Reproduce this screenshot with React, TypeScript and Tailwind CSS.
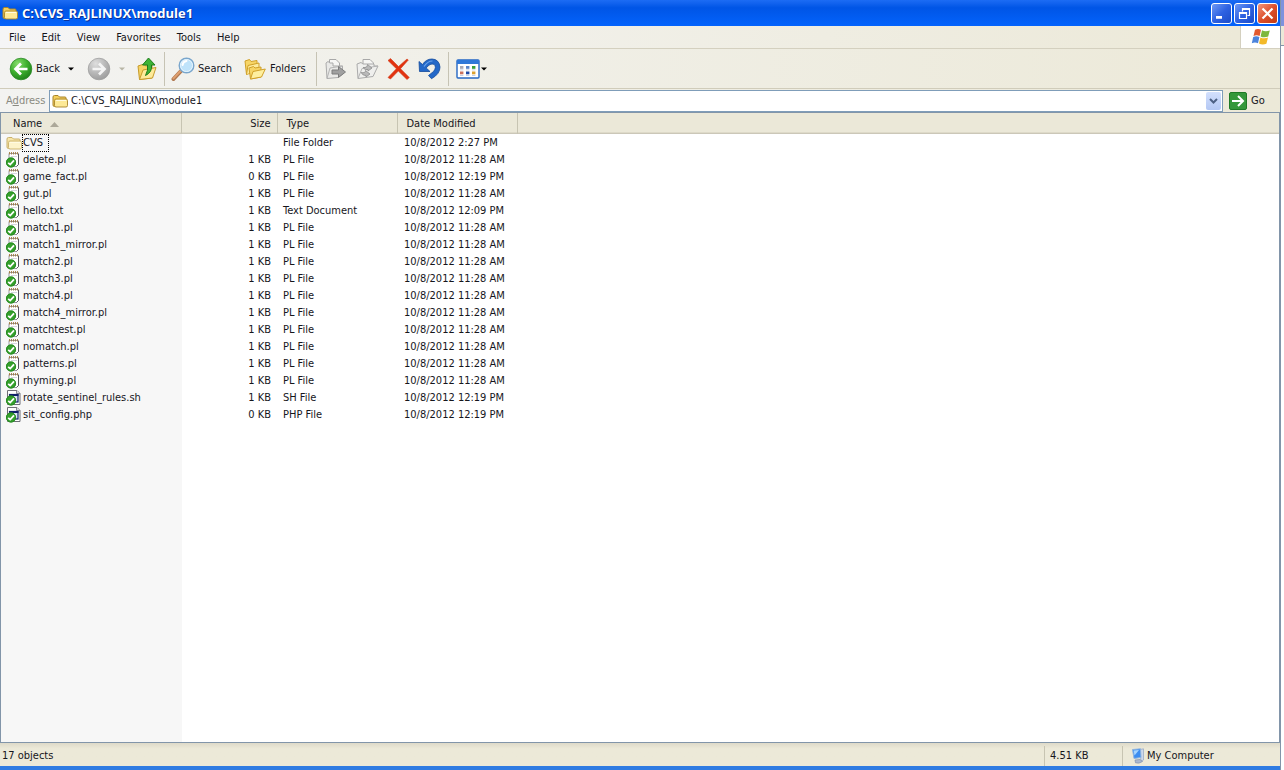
import { clsx } from 'clsx';

type FileKind = 'folder' | 'doc' | 'script';

interface Entry {
    name: string;
    size: string;
    type: string;
    modified: string;
    kind: FileKind;
}

const pl = (name: string, size = '1 KB', modified = '10/8/2012 11:28 AM'): Entry => ({
    name,
    size,
    type: 'PL File',
    modified,
    kind: 'doc',
});

const entries: Entry[] = [
    { name: 'CVS', size: '', type: 'File Folder', modified: '10/8/2012 2:27 PM', kind: 'folder' },
    pl('delete.pl'),
    pl('game_fact.pl', '0 KB', '10/8/2012 12:19 PM'),
    pl('gut.pl'),
    { name: 'hello.txt', size: '1 KB', type: 'Text Document', modified: '10/8/2012 12:09 PM', kind: 'doc' },
    pl('match1.pl'),
    pl('match1_mirror.pl'),
    pl('match2.pl'),
    pl('match3.pl'),
    pl('match4.pl'),
    pl('match4_mirror.pl'),
    pl('matchtest.pl'),
    pl('nomatch.pl'),
    pl('patterns.pl'),
    pl('rhyming.pl'),
    { name: 'rotate_sentinel_rules.sh', size: '1 KB', type: 'SH File', modified: '10/8/2012 12:19 PM', kind: 'script' },
    { name: 'sit_config.php', size: '0 KB', type: 'PHP File', modified: '10/8/2012 12:19 PM', kind: 'script' },
];

const menus = ['File', 'Edit', 'View', 'Favorites', 'Tools', 'Help'];

function FolderIcon({ className, pale }: { className?: string; pale?: boolean }) {
    const edge = pale ? '#c9b06a' : '#a8842a';
    return (
        <svg viewBox="0 0 16 14" className={className} aria-hidden="true">
            <path d="M1 3 Q1 1.5 2.5 1.5 H6 L7.5 3 H13 Q14 3 14 4 V11 Q14 12.5 12.5 12.5 H2.5 Q1 12.5 1 11 Z" fill={pale ? '#f8e6a8' : '#f4cf5c'} stroke={edge} />
            <path d="M2.5 6.5 Q2.5 5 4 5 H14 Q15.5 5 15.5 6.5 V11.5 Q15.5 13 14 13 H4 Q2.5 13 2.5 11.5 Z" fill={pale ? '#fdf4cb' : '#fde996'} stroke={edge} strokeWidth="0.9" />
            <path d="M4 6.5 H14" stroke="#fffbe2" />
        </svg>
    );
}

function OkBadge() {
    return (
        <>
            <circle cx="5" cy="10.5" r="5" fill="#35a02c" />
            <circle cx="5" cy="10.5" r="4.6" fill="none" stroke="#1f831d" strokeWidth="0.8" />
            <path d="M2.2 10.8 L4.2 12.6 L8 8.4" fill="none" stroke="#fff" strokeWidth="1.8" />
        </>
    );
}

function EntryIcon({ kind }: { kind: FileKind }) {
    if (kind === 'folder') {
        return <FolderIcon className="h-[14px] w-4" pale />;
    }
    return (
        <svg viewBox="0 0 15 16" className="h-4 w-[15px]" aria-hidden="true">
            {kind === 'doc' ? (
                <>
                    <path d="M3 1.5 H12.5 V12.5 L10.5 14.5 H3 Z" fill="#fff" stroke="#9a9aa2" />
                    <path d="M12.5 2 V12.5 L10.5 14.5" fill="none" stroke="#55555f" />
                    <path d="M3.5 0 V2.5 M5.5 0 V2.5 M7.5 0 V2.5 M9.5 0 V2.5 M11.5 0 V2.5" stroke="#a07a40" strokeWidth="0.9" />
                    <path d="M5 4.5 H11" stroke="#d5d5de" />
                </>
            ) : (
                <>
                    <path d="M1.5 0.5 H11 L14 3.5 V14.5 H1.5 Z" fill="#fff" stroke="#6e6e76" />
                    <path d="M10.5 0.5 V3.5 H14" fill="#dcdce4" stroke="#6e6e76" strokeWidth="0.8" />
                    <rect x="3.5" y="4.5" width="8.5" height="7.5" fill="#dfe6f6" stroke="#10206a" strokeWidth="1.2" />
                    <path d="M3 5 H12.5" stroke="#10206a" strokeWidth="2" />
                </>
            )}
            <OkBadge />
        </svg>
    );
}

function RoundArrow({ back }: { back?: boolean }) {
    return (
        <svg viewBox="0 0 24 24" className="size-6 shrink-0" aria-hidden="true">
            <defs>
                <radialGradient id={back ? 'roundGreen' : 'roundGray'} cx="0.35" cy="0.25" r="0.85">
                    <stop offset="0" stopColor={back ? '#86dc6c' : '#dedede'} />
                    <stop offset="0.5" stopColor={back ? '#3eb02e' : '#b9b9b9'} />
                    <stop offset="1" stopColor={back ? '#1a7a17' : '#989898'} />
                </radialGradient>
            </defs>
            <circle cx="12" cy="12" r="10.8" fill={back ? 'url(#roundGreen)' : 'url(#roundGray)'} stroke={back ? '#2c8a26' : '#a0a0a0'} strokeWidth="0.8" />
            <path
                d={back ? 'M18.5 12 H7 M12 6.5 L6.5 12 L12 17.5' : 'M5.5 12 H17 M12 6.5 L17.5 12 L12 17.5'}
                fill="none"
                stroke={back ? '#fff' : '#f4f4f4'}
                strokeWidth="2.7"
            />
        </svg>
    );
}

function UpFolderIcon() {
    return (
        <svg viewBox="0 0 22 24" className="h-6 w-[22px]" aria-hidden="true">
            <path d="M2 9 L8 7 L9.5 9 L16 8 V21 L3.5 22.5 Z" fill="#f6d465" stroke="#c79b2b" />
            <path d="M3.5 22.5 L7 13 L20 10.5 L16.5 21 Z" fill="#fdea9a" stroke="#c79b2b" />
            <path d="M12.5 1 L19 8 H15.5 Q16.5 15 9.5 18.5 Q12.5 13 11.5 8 H6.5 Z" fill="#3eb336" stroke="#1d7d1b" />
        </svg>
    );
}

function SearchIcon() {
    return (
        <svg viewBox="0 0 24 24" className="size-6 shrink-0" aria-hidden="true">
            <path d="M2.5 22 L9.5 14.5" stroke="#b07850" strokeWidth="4" strokeLinecap="round" />
            <path d="M2.5 21.4 L9.5 14" stroke="#dfa070" strokeWidth="2" strokeLinecap="round" />
            <circle cx="15.5" cy="8.5" r="7.3" fill="#bfe3fa" stroke="#7aa6cc" strokeWidth="1.4" />
            <circle cx="15.5" cy="8.5" r="6" fill="none" stroke="#e8f5fd" />
            <path d="M11.5 8 Q12 4.5 15.5 4" fill="none" stroke="#fff" strokeWidth="2" strokeLinecap="round" />
        </svg>
    );
}

function FoldersIcon() {
    return (
        <svg viewBox="0 0 22 22" className="size-[22px] shrink-0" aria-hidden="true">
            <path d="M1 3 L5.5 1.5 L7 3.5 L13 2.5 V13 L2.5 16.5 Z" fill="#f7d566" stroke="#d0a028" />
            <path d="M2.5 16.5 L4 7.5 L15 5 V9" fill="#fdeb9c" stroke="#d0a028" />
            <path d="M5 10 L9.5 8.5 L11 10 L17 9 V19 L6.5 21 Z" fill="#f7d566" stroke="#d0a028" />
            <path d="M6.5 21 L9 13.5 L21.3 11 L17.5 19 Z" fill="#feef9f" stroke="#d0a028" />
        </svg>
    );
}

function MoveToIcon() {
    return (
        <svg viewBox="0 0 23 22" className="h-[22px] w-[23px]" aria-hidden="true">
            <path d="M5.5 6 V1.5 H12 L15.5 5 V8" fill="#f6f6f4" stroke="#a8a8a8" />
            <path d="M2 5 L4 3.5 L6 5 H9 V8 H18.5 V16 L14 19.5 L3 20.5 Z" fill="#e9e9e7" stroke="#ababab" />
            <path d="M3 20.5 L6 10 L18.5 8" fill="none" stroke="#b4b4b4" />
            <path d="M8 12 H14.5 V8.5 L21.5 14 L14.5 19.5 V16 H8 Z" fill="#a0a0a0" stroke="#7c7c7c" />
        </svg>
    );
}

function CopyToIcon() {
    return (
        <svg viewBox="0 0 24 22" className="h-[22px] w-6" aria-hidden="true">
            <path d="M8 7 V1.5 H15 L18.5 5 V9" fill="#f6f6f4" stroke="#a8a8a8" />
            <path d="M2 6 L6 4.5 L8 6 H19 V8 H23 L18 18.5 L3 20.5 Z" fill="#efefed" stroke="#ababab" />
            <path d="M3 20.5 L7 10.5 L23 8" fill="none" stroke="#b4b4b4" />
            <path d="M8 9.5 Q12.5 10 12.5 6.5 L17 10 L13 13 V11.5 Q10 12.5 8 9.5 Z" fill="#b9b9b9" stroke="#8d8d8d" strokeWidth="0.8" />
            <path d="M6 14.5 Q10.5 15.5 10.5 12.5 L15 16 L11 19 V17.5 Q8 18 6 14.5 Z" fill="#b9b9b9" stroke="#8d8d8d" strokeWidth="0.8" />
        </svg>
    );
}

function DeleteIcon() {
    return (
        <svg viewBox="0 0 23 22" className="h-[22px] w-[23px]" aria-hidden="true">
            <path d="M1 2.5 L3.5 0.5 L11.5 8.5 L20 1 L21.3 2 L13.5 10.7 L22.3 19.5 L20 21.5 L11.3 13 L3.5 21 L1 19.5 L9.4 10.7 Z" fill="#e2320f" stroke="#d0401c" strokeWidth="0.6" />
        </svg>
    );
}

function UndoIcon() {
    return (
        <svg viewBox="0 0 23 22" className="h-[22px] w-[23px]" aria-hidden="true">
            <path d="M1 3.5 L1.5 13.5 H12 L8.2 10 Q12 5 16 6.3 Q19 9 15.5 13.5 L10.5 17.5 L13.5 20.7 Q22 16 22 9 Q21 1.2 14 1 Q8 1 4.5 6.5 Z" fill="#2368c8" stroke="#134a9c" strokeWidth="0.8" />
            <path d="M6 8.5 Q10 2.8 14.5 3" fill="none" stroke="#6ba4ec" strokeWidth="1.2" />
        </svg>
    );
}

function ViewsIcon() {
    const cells = ['#a9a9b4', '#5b85c8', '#38a03a', '#c9705c', '#1c49a8', '#dba02f'];
    return (
        <svg viewBox="0 0 24 20" className="h-5 w-6" aria-hidden="true">
            <rect x="1" y="1" width="22" height="18" rx="1" fill="#fff" stroke="#2467c4" strokeWidth="1.4" />
            <rect x="1" y="1" width="22" height="4" fill="#2f78d8" />
            {cells.map((fill, i) => (
                <g key={fill}>
                    <rect x={4 + (i % 3) * 6} y={i < 3 ? 7 : 12.5} width="3.4" height="2.8" fill={fill} />
                    <rect x={4 + (i % 3) * 6} y={i < 3 ? 10.5 : 16} width="3.4" height="0.8" fill="#b8c4dc" />
                </g>
            ))}
        </svg>
    );
}

function WindowsFlag() {
    return (
        <svg viewBox="0 0 20 18" className="h-[18px] w-5" aria-hidden="true">
            <path d="M4 1.8 Q7 0 10 1.8 L8.6 8 Q5.6 6.4 2.5 8 Z" fill="#e2592e" />
            <path d="M11 2.2 Q14.5 4 18.8 2.4 L17.2 8.6 Q13 10.2 9.6 8.4 Z" fill="#7db83c" />
            <path d="M2.2 9 Q5.3 7.4 8.4 9 L7 15.2 Q4 13.6 0.8 15.2 Z" fill="#4b83dc" />
            <path d="M9.4 9.4 Q13 11.2 17 9.6 L15.4 15.8 Q11.5 17.4 8 15.6 Z" fill="#f3b928" />
        </svg>
    );
}

function ComputerIcon() {
    return (
        <svg viewBox="0 0 14 16" className="h-4 w-[14px]" aria-hidden="true">
            <path d="M9 1.5 L12.5 0.8 V12 L10 13.5 Z" fill="#cfd9ea" stroke="#93a5c2" strokeWidth="0.7" />
            <path d="M1.5 1.5 L9.5 0.8 L10 9.5 L3 10.5 Z" fill="#3c8df0" stroke="#8fb4e0" />
            <path d="M2.6 2.6 L8 2 L3.5 7.5 Z" fill="#a5d4ff" />
            <path d="M4 12 L9 11.5 L11.5 13.5 Q8 16 4.5 14.8 Z" fill="#aab8d0" stroke="#7f8fae" strokeWidth="0.7" />
        </svg>
    );
}

function Caret({ faded }: { faded?: boolean }) {
    return (
        <svg viewBox="0 0 6 4" className="h-1 w-[6px]" aria-hidden="true">
            <path d="M0 0.5 H6 L3 3.5 Z" fill={faded ? '#b8b5a6' : '#000'} />
        </svg>
    );
}

function Separator() {
    return <div className="h-[34px] w-px shrink-0 bg-[#c6c3b4]" />;
}

function CaptionButton({ label, close, path }: { label: string; close?: boolean; path: string }) {
    return (
        <button
            type="button"
            aria-label={label}
            className={clsx(
                'flex size-[21px] items-center justify-center rounded-[3px] border border-white bg-linear-to-br',
                close ? 'from-[#f0947a] via-[#dd4f2b] to-[#c03a14]' : 'from-[#6f98f4] via-[#2e62e2] to-[#1c4cc8]',
            )}
        >
            <svg viewBox="0 0 19 19" className="size-[19px]" aria-hidden="true">
                <path d={path} fill="none" stroke="#fff" strokeWidth={close ? 2.2 : 1.2} />
            </svg>
        </button>
    );
}

function TitleBar() {
    return (
        <header className="flex h-[26px] items-center bg-linear-to-b from-[#1c6cf4] via-[#0055e6] via-30% to-[#0463fc] px-[2px]">
            <FolderIcon className="h-[14px] w-4" />
            <h1 className="flex-1 pl-1 font-['Open_Sans','Noto_Sans',sans-serif] text-[13px] leading-5 font-bold text-white [text-shadow:1px_1px_#0a2f96]">
                C:\CVS_RAJLINUX\module1
            </h1>
            <div className="flex gap-[2px]">
                <CaptionButton label="Minimize" path="M4 12.5 H10 M4 13.5 H10 M4 14.2 H10" />
                <CaptionButton label="Restore" path="M4.5 8.5 H11.5 V14.5 H4.5 Z M4.5 9.3 H11.5 M7.5 7.5 V4.5 H14.5 V11.5 H12.5 M7.5 5.3 H14.5" />
                <CaptionButton label="Close" close path="M4.5 4.5 L14.5 14.5 M14.5 4.5 L4.5 14.5" />
            </div>
        </header>
    );
}

function MenuBar() {
    return (
        <div className="flex h-[23px] border-b border-[#d4d0bf]">
            <nav className="flex flex-1 items-center bg-linear-to-r from-[#f5f5f6] to-[#ece9d8] pt-px pl-px">
                {menus.map((m) => (
                    <button key={m} type="button" className="px-2">
                        {m}
                    </button>
                ))}
            </nav>
            <div className="flex w-10 items-center justify-center border-l border-[#d4d0bf] bg-white">
                <WindowsFlag />
            </div>
        </div>
    );
}

function Toolbar() {
    return (
        <div className="flex h-10 items-center border-b border-[#d0ccba] bg-linear-to-r from-[#f3f3f1] to-[#ece9d8] pl-[9px]">
            <button type="button" className="flex w-[52px] items-center gap-[3px]">
                <RoundArrow back />
                <span className="pt-px">Back</span>
            </button>
            <button type="button" aria-label="Back history" className="ml-[7px]">
                <Caret />
            </button>
            <button type="button" aria-label="Forward" className="ml-[13px]">
                <RoundArrow />
            </button>
            <button type="button" aria-label="Forward history" className="ml-2">
                <Caret faded />
            </button>
            <button type="button" aria-label="Up" className="mr-[6px] ml-[11px]">
                <UpFolderIcon />
            </button>
            <Separator />
            <button type="button" className="ml-[6px] flex w-[73px] items-center gap-[3px]">
                <SearchIcon />
                <span className="pt-px">Search</span>
            </button>
            <button type="button" className="flex w-[72px] items-center gap-1">
                <FoldersIcon />
                <span className="pt-px">Folders</span>
            </button>
            <Separator />
            <div className="flex gap-2 px-[7px]">
                <button type="button" aria-label="Move To">
                    <MoveToIcon />
                </button>
                <button type="button" aria-label="Copy To">
                    <CopyToIcon />
                </button>
                <button type="button" aria-label="Delete">
                    <DeleteIcon />
                </button>
                <button type="button" aria-label="Undo">
                    <UndoIcon />
                </button>
            </div>
            <Separator />
            <button type="button" aria-label="Views" className="ml-[7px] flex items-center gap-px">
                <ViewsIcon />
                <Caret />
            </button>
        </div>
    );
}

function AddressBar() {
    return (
        <div className="flex h-[23px] items-center bg-linear-to-r from-[#f3f3f1] to-[#ece9d8]">
            <label htmlFor="address" className="w-[49px] shrink-0 pt-px pl-[6px] text-[#8a8a80]">
                A<u>d</u>dress
            </label>
            <div className="flex h-[22px] flex-1 items-center border border-[#7f9db9] bg-white pl-[2px]">
                <FolderIcon className="h-[14px] w-4" />
                <input id="address" type="text" defaultValue="C:\CVS_RAJLINUX\module1" className="min-w-0 flex-1 pt-px pl-[3px] outline-none" />
                <button type="button" aria-label="Show addresses" className="mr-px flex h-[18px] w-[15px] items-center justify-center rounded-xs bg-linear-to-b from-[#d3e0fd] to-[#b4c8f4]">
                    <svg viewBox="0 0 9 6" className="h-[6px] w-[9px]" aria-hidden="true">
                        <path d="M1 1 L4.5 4.5 L8 1" fill="none" stroke="#4d6185" strokeWidth="2" />
                    </svg>
                </button>
            </div>
            <button type="button" className="ml-[6px] flex w-[51px] items-center gap-1">
                <svg viewBox="0 0 18 18" className="size-[18px]" aria-hidden="true">
                    <rect x="0.5" y="0.5" width="17" height="17" rx="1.5" fill="#35983a" stroke="#1f7a25" />
                    <path d="M3 9 H14 M9 4 L14 9 L9 14" fill="none" stroke="#fff" strokeWidth="2" />
                </svg>
                <span className="pt-px">Go</span>
            </button>
        </div>
    );
}

function FileList() {
    const heading = 'border-r border-[#c7c4b2] pt-px font-normal';
    return (
        <main className="flex-1 border border-[#8295a9] bg-[linear-gradient(to_right,#f7f7f7_181px,#fff_181px)]">
            <table className="w-full table-fixed border-collapse text-left">
                <colgroup>
                    <col className="w-[180px]" />
                    <col className="w-24" />
                    <col className="w-[120px]" />
                    <col className="w-[120px]" />
                    <col />
                </colgroup>
                <thead>
                    <tr className="h-[21px] bg-[#ebe8d8] shadow-[inset_0_-1px_#cbc7b8,inset_0_-2px_#dedac9]">
                        <th className={clsx(heading, 'pl-3')}>
                            <span className="flex items-center gap-2">
                                Name
                                <svg viewBox="0 0 9 5" className="h-[5px] w-[9px]" aria-hidden="true">
                                    <path d="M0 5 L4.5 0 L9 5 Z" fill="#aca899" />
                                </svg>
                            </span>
                        </th>
                        <th className={clsx(heading, 'pr-[6px] text-right')}>Size</th>
                        <th className={clsx(heading, 'pl-[9px]')}>Type</th>
                        <th className={clsx(heading, 'pl-[9px]')}>Date Modified</th>
                        <th />
                    </tr>
                </thead>
                <tbody>
                    {entries.map((e) => (
                        <tr key={e.name} className="h-[17px]">
                            <td className="pl-[5px]">
                                <span className="flex h-[17px] items-center">
                                    <EntryIcon kind={e.kind} />
                                    <span className={e.kind === 'folder' ? 'border border-dotted border-black pr-[5px]' : 'pt-px pl-[2px]'}>
                                        {e.name}
                                    </span>
                                </span>
                            </td>
                            <td className="pt-px pr-[6px] text-right">{e.size}</td>
                            <td className="pt-px pl-[6px]">{e.type}</td>
                            <td className="pt-px pl-[7px]">{e.modified}</td>
                            <td />
                        </tr>
                    ))}
                </tbody>
            </table>
        </main>
    );
}

function StatusBar() {
    return (
        <footer className="flex h-[23px] items-center bg-linear-to-b from-[#dedac9] via-[#ece9d8] via-25% to-[#ece9d8] pt-[2px]">
            <span className="flex-1 pl-[2px]">17 objects</span>
            <span className="w-[78px] border-l border-[#c7c4b2] pl-[5px] leading-5">4.51 KB</span>
            <span className="flex w-[158px] items-center gap-[2px] border-l border-[#c7c4b2] pl-2 leading-5">
                <ComputerIcon />
                My Computer
            </span>
        </footer>
    );
}

export default function App() {
    return (
        <div className="flex min-h-screen bg-white font-['DejaVu_Sans_Condensed','Noto_Sans',sans-serif] text-[11px] leading-4 text-[#16161c]">
            <div className="flex min-w-0 flex-1 flex-col">
                <TitleBar />
                <MenuBar />
                <Toolbar />
                <AddressBar />
                <FileList />
                <StatusBar />
                <div className="h-1 bg-[#2f7be2]" />
            </div>
            {/* Edge of the window behind */}
            <div className="flex w-1 flex-col border-l border-[#8295a9]">
                <div className="h-[26px] bg-[#7e92dd]" />
                <div className="h-5 border-b border-[#8295a9] bg-[#ece9d8]" />
            </div>
        </div>
    );
}
